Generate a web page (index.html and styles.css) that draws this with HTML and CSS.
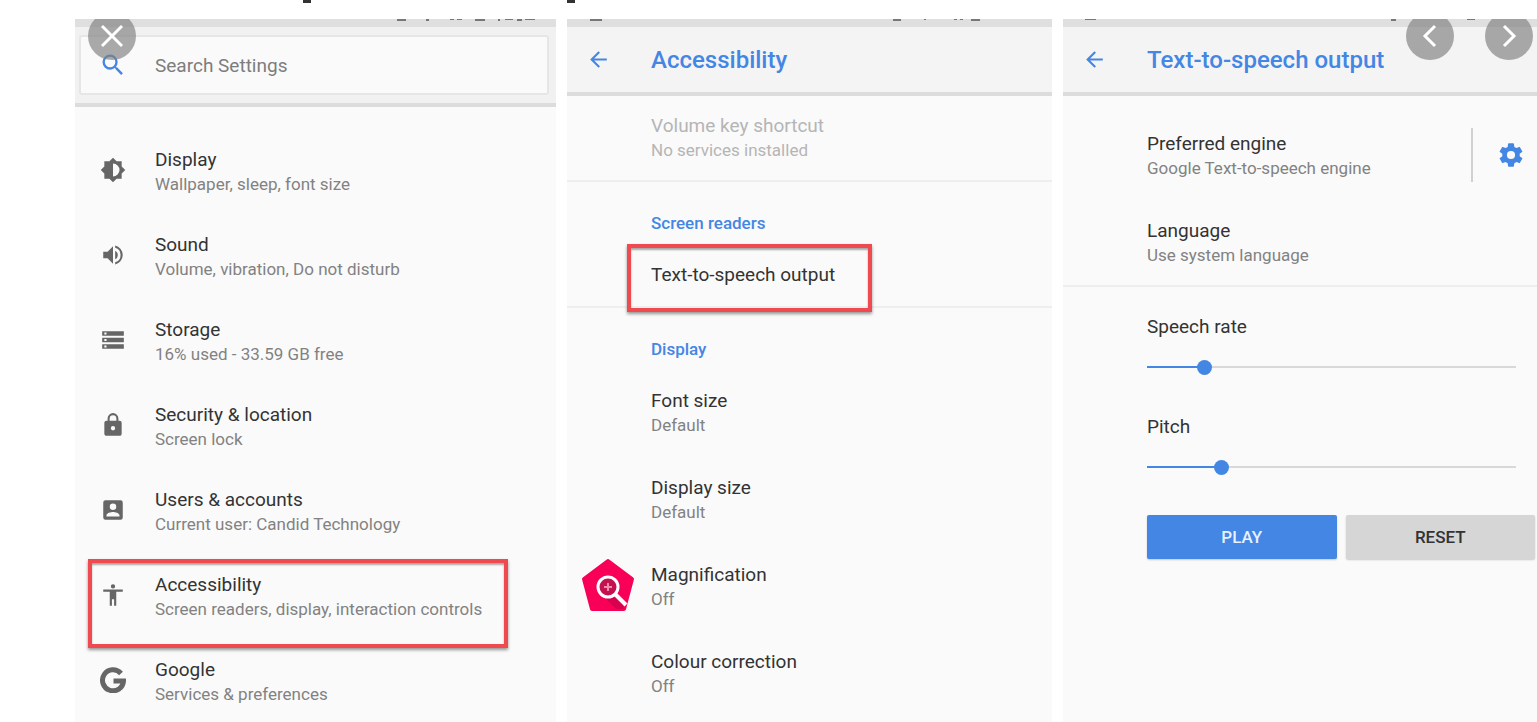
FILE: index.html
```html
<!DOCTYPE html>
<html lang="en">
<head>
<meta charset="utf-8">
<title>Text-to-speech settings</title>
<link rel="stylesheet" href="styles.css">
</head>
<body>
<div class="page">
  <svg class="headline-tail" width="500" height="3" aria-hidden="true"><path d="M228 0h8v3h-8zM492 0h8v3h-8z"/></svg>
  <main class="gallery">
    <section class="screen" aria-label="Settings">
      <div class="status"><svg width="160" height="3" aria-hidden="true"><path d="M2 0h9v2H2zM31 0h3v2h-3zM55 0h4v1h-4zM62 0h5v1h-5zM80 0h10v2H80zM103 0h2v2h-2zM110 0h8v1h-8zM122 0h5v2h-5zM130 0h10v1h-10z"/></svg></div>
      <div class="search-area">
        <label class="search">
          <svg class="search-icon" viewBox="0 0 24 24" aria-hidden="true"><path d="M15.5 14h-.79l-.28-.27A6.47 6.47 0 0 0 16 9.5 6.5 6.5 0 1 0 9.500 16c1.610 0 3.090-.59 4.230-1.570l.27.28v.79l5 4.990L20.490 19l-4.990-5zm-6 0a4.500 4.500 0 1 1 0-9 4.500 4.500 0 0 1 0 9z"/></svg>
          <input type="text" placeholder="Search Settings" aria-label="Search Settings">
        </label>
      </div>
      <nav class="settings">
        <a class="setting" href="#"><svg viewBox="0 0 24 24"><path d="M20 15.310 23.310 12 20 8.690V4h-4.690L12 .69 8.690 4H4v4.690L.69 12 4 15.310V20h4.690L12 23.310 15.310 20H20zM12 18V6a6 6 0 0 1 0 12z"/></svg><span><span class="name">Display</span><span class="note">Wallpaper, sleep, font size</span></span></a>
        <a class="setting" href="#"><svg viewBox="0 0 24 24"><path d="M3 9v6h4l5 5V4L7 9zm13.500 3A4.500 4.500 0 0 0 14 7.970v8.050A4.470 4.470 0 0 0 16.500 12zM14 3.230v2.060a7 7 0 0 1 0 13.420v2.060a9 9 0 0 0 0-17.540z"/></svg><span><span class="name">Sound</span><span class="note">Volume, vibration, Do not disturb</span></span></a>
        <a class="setting" href="#"><svg viewBox="0 0 24 24"><path d="M2 20h20v-4H2zm2-3h2v2H4zM2 4v4h20V4zm4 3H4V5h2zm-4 7h20v-4H2zm2-3h2v2H4z"/></svg><span><span class="name">Storage</span><span class="note">16% used - 33.59 GB free</span></span></a>
        <a class="setting" href="#"><svg viewBox="0 0 24 24"><path d="M18 8h-1V6A5 5 0 0 0 7 6v2H6a2 2 0 0 0-2 2v10c0 1.100.9 2 2 2h12a2 2 0 0 0 2-2V10a2 2 0 0 0-2-2zm-6 9a2 2 0 1 1 0-4 2 2 0 0 1 0 4zm3.100-9H8.900V6a3.100 3.100 0 0 1 6.200 0z"/></svg><span><span class="name">Security &amp; location</span><span class="note">Screen lock</span></span></a>
        <a class="setting" href="#"><svg viewBox="0 0 24 24"><path d="M3 5v14a2 2 0 0 0 2 2h14a2 2 0 0 0 2-2V5a2 2 0 0 0-2-2H5a2 2 0 0 0-2 2zm12 4a3 3 0 1 1-6 0 3 3 0 0 1 6 0zm-9 8c0-2 4-3.100 6-3.100s6 1.100 6 3.100v1H6z"/></svg><span><span class="name">Users &amp; accounts</span><span class="note">Current user: Candid Technology</span></span></a>
        <a class="setting marked" href="#"><svg viewBox="0 0 24 24"><path d="M12 2a2 2 0 1 1 0 4 2 2 0 0 1 0-4zm9 7h-6v13h-2v-6h-2v6H9V9H3V7h18z"/></svg><span><span class="name">Accessibility</span><span class="note">Screen readers, display, interaction controls</span></span></a>
        <a class="setting" href="#"><svg class="g-mark" viewBox="0 0 26 26"><path d="M21 6.500A10.500 10.500 0 1 0 23.500 14H13.500" fill="none" stroke="#666" stroke-width="5"/></svg><span><span class="name">Google</span><span class="note">Services &amp; preferences</span></span></a>
      </nav>
    </section>

    <section class="screen" aria-label="Accessibility">
      <div class="status"><svg width="466" height="3" aria-hidden="true"><path d="M5 0h12v2H5zM308 0h8v2h-8zM339 0h2v1h-2zM369 0h3v1h-3zM375 0h3v1h-3zM386 0h9v2h-9z"/></svg></div>
      <header class="bar"><button class="back" aria-label="Back"><svg viewBox="0 0 24 24"><path d="M20 11H7.830l5.590-5.590L12 4l-8 8 8 8 1.410-1.410L7.830 13H20z"/></svg></button><h2>Accessibility</h2></header>
      <div class="option first disabled"><span class="name">Volume key shortcut</span><span class="note">No services installed</span></div>
      <h3 class="group">Screen readers</h3>
      <a class="option single" href="#"><span class="name">Text-to-speech output</span></a>
      <h3 class="group">Display</h3>
      <a class="option" href="#"><span class="name">Font size</span><span class="note">Default</span></a>
      <a class="option" href="#"><span class="name">Display size</span><span class="note">Default</span></a>
      <a class="option lens" href="#"><span class="name">Magnification</span><span class="note">Off</span>
        <svg class="badge" viewBox="0 0 54 54" aria-hidden="true"><path d="M27 3 51 21 43 51H11L3 21z" fill="#f80058" stroke="#f80058" stroke-width="4" stroke-linejoin="round"/><path d="m33 35 10 10-1 6H35L20 36z" fill="#d9004f"/><circle cx="27" cy="29" r="10" fill="#c3124f" stroke="#fff" stroke-width="3"/><path d="m34 36 11 11" stroke="#fff" stroke-width="4"/><path d="M27 25v8M23 29h8" stroke="#f48aae" stroke-width="2"/></svg>
      </a>
      <a class="option" href="#"><span class="name">Colour correction</span><span class="note">Off</span></a>
    </section>

    <section class="screen" aria-label="Text-to-speech output">
      <div class="status"><svg width="456" height="3" aria-hidden="true"><path d="M5 0h11v1H5zM311 0h5v2h-5zM387 0h8v1h-8z"/></svg></div>
      <header class="bar"><button class="back" aria-label="Back"><svg viewBox="0 0 24 24"><path d="M20 11H7.830l5.590-5.590L12 4l-8 8 8 8 1.410-1.410L7.830 13H20z"/></svg></button><h2>Text-to-speech output</h2></header>
      <div class="engine">
        <a class="option" href="#"><span class="name">Preferred engine</span><span class="note">Google Text-to-speech engine</span></a>
        <button class="gear" aria-label="Engine settings"><svg viewBox="0 0 24 24"><path d="M19.430 12.980a7.800 7.800 0 0 0 0-1.960l2.110-1.650a.5.5 0 0 0 .12-.64l-2-3.460a.5.5 0 0 0-.61-.22l-2.490 1a7.300 7.300 0 0 0-1.690-.98l-.38-2.650A.5.5 0 0 0 14 2h-4a.5.5 0 0 0-.49.42l-.38 2.650c-.61.25-1.170.59-1.690.98l-2.490-1a.5.5 0 0 0-.61.22l-2 3.460a.5.5 0 0 0 .12.64l2.110 1.650a8 8 0 0 0 0 1.960l-2.110 1.650a.5.5 0 0 0-.12.64l2 3.460c.12.22.39.3.61.22l2.490-1c.52.4 1.080.73 1.690.98l.38 2.650c.03.24.24.42.49.42h4c.25 0 .46-.18.49-.42l.38-2.650a7.300 7.300 0 0 0 1.690-.98l2.490 1c.23.09.49 0 .61-.22l2-3.460a.5.5 0 0 0-.12-.64zM12 15.500a3.500 3.500 0 1 1 0-7 3.500 3.500 0 0 1 0 7z"/></svg></button>
      </div>
      <a class="option language" href="#"><span class="name">Language</span><span class="note">Use system language</span></a>
      <form class="voice">
        <label class="name" for="rate">Speech rate</label>
        <input id="rate" type="range" min="0" max="100" value="14" style="--fill:15%">
        <label class="name" for="pitch">Pitch</label>
        <input id="pitch" type="range" min="0" max="100" value="19" style="--fill:20%">
        <div class="actions"><button type="button" class="play">PLAY</button><button type="reset" class="reset">RESET</button></div>
      </form>
    </section>

    <div class="controls">
      <button class="round" aria-label="Close"><svg viewBox="0 0 48 48"><path d="m14 14 20 20M34 14 14 34"/></svg></button>
      <div class="pager">
        <button class="round" aria-label="Previous"><svg viewBox="0 0 48 48"><path d="M29 14 19 24l10 10"/></svg></button>
        <button class="round" aria-label="Next"><svg viewBox="0 0 48 48"><path d="m19 14 10 10-10 10"/></svg></button>
      </div>
    </div>
  </main>
</div>
</body>
</html>
```

FILE: styles.css
```css
* { box-sizing: border-box; }

body {
  margin: 0;
  background: #fff;
  font-family: Roboto, "Liberation Sans", sans-serif;
  color: #333;
}

.page {
  display: flex;
  flex-direction: column;
  height: 100vh;
  padding-left: 75px;
  overflow: hidden;
}

.headline-tail {
  flex: none;
  margin-bottom: 16px;
  fill: #333;
}

.gallery {
  position: relative;
  flex: 1;
  display: grid;
  grid-template-columns: 481fr 485fr 474fr;
  gap: 11px;
  min-height: 0;
  overflow: hidden;
}

.screen {
  min-width: 0;
  background: #fafafa;
}

.status {
  display: flex;
  justify-content: flex-end;
  height: 8px;
  padding-right: 1px;
  background: #dfdfdf;
  fill: #777;
}

button, input { font-family: inherit; }
button { border: 0; cursor: pointer; }
a { color: inherit; text-decoration: none; }
h2, h3 { margin: 0; font-weight: 500; color: #4486e4; }

.name, .note { display: block; line-height: 24px; }
.name { font-size: 19px; }
.note { font-size: 17px; color: #828282; }

/* Search */
.search-area {
  padding: 8px 7px 8px 4px;
  background: #f1f1f1;
  border-bottom: 4px solid #dcdcdc;
}

.search {
  display: flex;
  align-items: center;
  height: 60px;
  padding-left: 18px;
  background: #fafafa;
  border: 2px solid #e6e6e6;
  border-radius: 3px;
}

.search-icon {
  width: 28px;
  height: 28px;
  margin-right: 28px;
  fill: #4486e4;
}

.search input {
  flex: 1;
  padding: 0;
  border: 0;
  background: transparent;
  font-size: 19px;
}
.search input::placeholder { color: #7d7d7d; opacity: 1; }

/* Settings list */
.settings { padding-top: 25px; }

.setting {
  position: relative;
  display: flex;
  height: 85px;
  padding: 16px 0 0 25px;
  gap: 29px;
}

.setting svg {
  width: 26px;
  height: 26px;
  margin-top: 9px;
  fill: #666;
}

.marked::after, .single::after {
  content: "";
  position: absolute;
  border: 4px solid #ef4a50;
  box-shadow: 0 2px 3px #0006, inset 0 2px 2px #0005;
}
.marked::after { inset: 2px 48px -6px 13px; }

/* Toolbar */
.bar {
  display: flex;
  align-items: center;
  height: 69px;
  padding-left: 19px;
  gap: 40px;
  background: #f4f4f4;
  border-bottom: 4px solid #dcdcdc;
}
.bar h2 { font-size: 24px; line-height: 28px; }

.back { padding: 0; background: none; }
.back svg { display: block; width: 25px; height: 25px; fill: #4486e4; }

/* Options */
.option {
  position: relative;
  display: block;
  height: 87px;
  padding: 18px 0 0 84px;
}
.first { height: 86px; border-bottom: 2px solid #eee; }
.disabled, .disabled .note { color: #b5b5b5; }

.group {
  padding: 29px 0 0 84px;
  font-size: 17px;
  line-height: 24px;
}

.single { height: 73px; padding-top: 28px; border-bottom: 2px solid #eee; }
.single::after { inset: 9px 180px -6px 60px; }

.group ~ .group ~ .option { padding-top: 28px; }

.badge {
  position: absolute;
  left: 14px;
  top: 23px;
  width: 54px;
  height: 54px;
}

/* Voice settings */
.engine { display: flex; padding-top: 18px; }
.engine .option { flex: 1; }
.engine .option, .language { padding-top: 18px; }

.gear {
  width: 66px;
  height: 54px;
  margin-top: 14px;
  padding: 0 0 0 24px;
  background: none;
  border-left: 2px solid #d0d0d0;
}
.gear svg { display: block; width: 28px; height: 28px; fill: #4486e4; }

.language { height: 86px; border-bottom: 2px solid #eee; }

.voice { padding: 28px 2px 0 84px; }

.voice input {
  display: block;
  width: calc(100% - 19px);
  height: 16px;
  margin: 20px 0 40px;
  appearance: none;
  background: linear-gradient(#4486e4, #4486e4) left / var(--fill) 2px no-repeat,
              linear-gradient(#d8d8d8, #d8d8d8) center / 100% 2px no-repeat;
}
.voice input::-webkit-slider-thumb {
  appearance: none;
  width: 15px;
  height: 15px;
  border-radius: 50%;
  background: #4486e4;
}

.actions { display: grid; grid-template-columns: 1fr 1fr; gap: 9px; }
.actions button {
  height: 44px;
  border-radius: 2px;
  font-size: 17px;
  font-weight: 500;
  box-shadow: 0 1px 2px #0003;
}
.play { background: #4486e4; color: #e8f1ff; }
.reset { background: #d6d6d6; color: #333; }

/* Viewer buttons over the screens */
.controls {
  position: absolute;
  inset: -7px 4px auto 13px;
  display: flex;
  justify-content: space-between;
  pointer-events: none;
}
.pager { display: flex; gap: 31px; }

.round {
  width: 48px;
  height: 48px;
  padding: 0;
  border-radius: 50%;
  background: #808080a8;
  pointer-events: auto;
}
.round svg { display: block; fill: none; stroke: #fff; stroke-width: 3; }
```
